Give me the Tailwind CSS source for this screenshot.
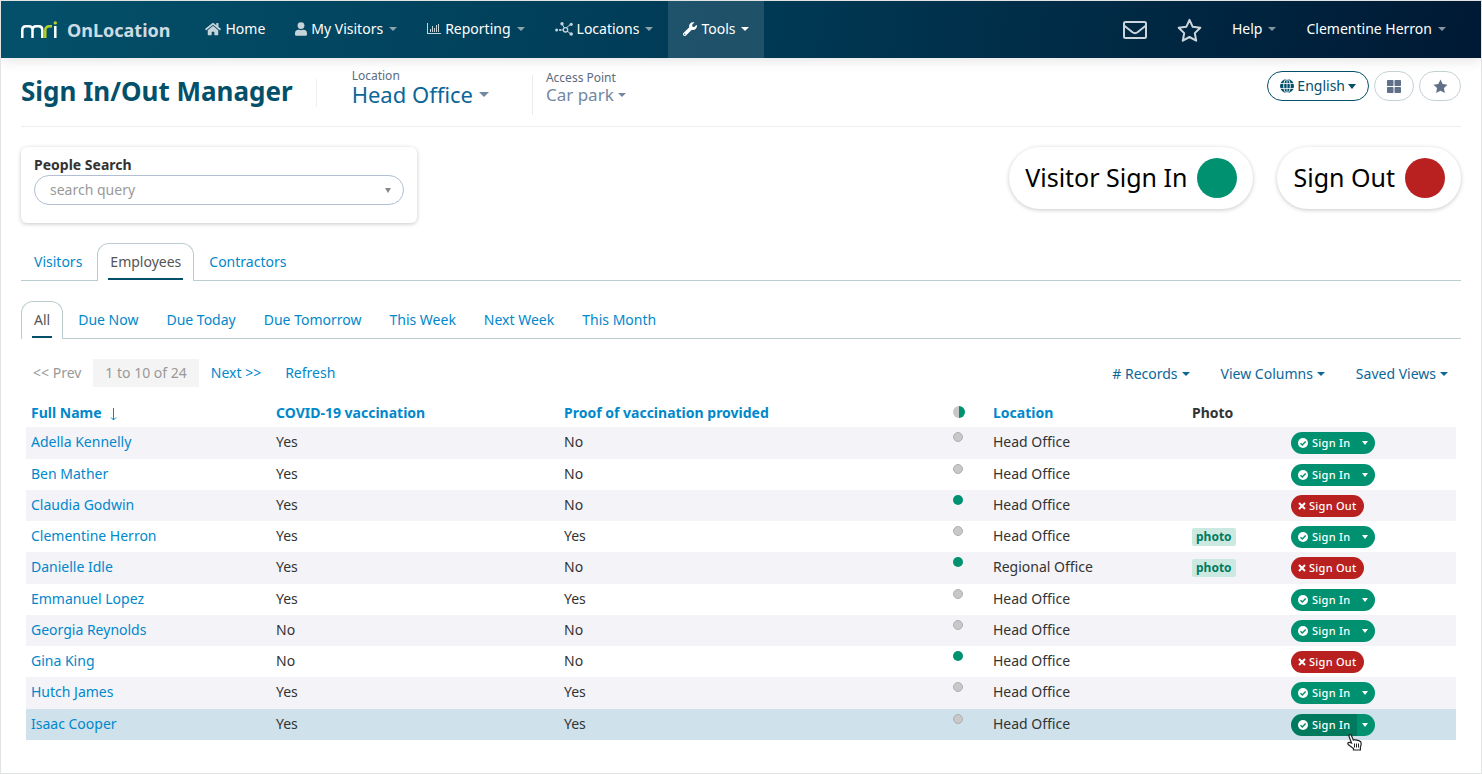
<!DOCTYPE html>
<html lang="en">
<head>
  <meta charset="UTF-8" />
  <meta name="viewport" content="width=device-width, initial-scale=1.0" />
  <title>Sign In/Out Manager</title>
  <script src="https://cdn.jsdelivr.net/npm/@tailwindcss/browser@4"></script>
</head>
<body class="min-h-screen border border-[#e2e4e4] bg-white font-['Noto_Sans',sans-serif] text-sm text-[#333]">

  <!-- Top bar -->
  <header class="flex h-[57px] items-center justify-between bg-linear-[100deg] from-[#04506a] via-[#003a55] to-[#001934] px-5 text-white shadow-[0_2px_12px_rgba(0,0,0,0.12)]">
    <div class="flex h-full items-center">
      <a href="#" class="mr-[20px] flex items-center gap-[10px]">
        <svg class="h-[18px] w-[36px]" viewBox="0 0 36 18" fill="none" stroke-width="2.5" aria-label="mri">
          <path d="M1.300 17V9Q1.300 5.200 5 5.200H7.800Q11.500 5.200 11.500 9V17M11.500 9Q11.500 5.200 15.200 5.200H17.800Q21.300 5.200 21.300 9V17" stroke="#fff" />
          <path d="M24.300 17V9.500Q24.300 5.200 28.500 5.200H31" stroke="#b4cf2c" />
          <path d="M34.300 17V5" stroke="#fff" />
          <circle cx="34.300" cy="1.900" r="1.700" fill="#b4cf2c" />
        </svg>
        <span class="text-lg font-bold text-[#cddbe2]">OnLocation</span>
      </a>
      <nav class="flex h-full items-center">
        <a href="#" class="flex h-full items-center gap-1 px-[15px] pb-[2px]">
          <svg class="h-[14px] w-4 fill-[#c5d3db]" viewBox="0 0 576 512"><path d="M280 148L96 300v164a16 16 0 0 0 16 16h112a16 16 0 0 0 16-16v-96a16 16 0 0 1 16-16h64a16 16 0 0 1 16 16v96a16 16 0 0 0 16 16h112a16 16 0 0 0 16-16V300L296 148a12 12 0 0 0-16 0zM572 251l-84-69V44a12 12 0 0 0-12-12h-56a12 12 0 0 0-12 12v72l-89-74a48 48 0 0 0-61 0L4 251a12 12 0 0 0-2 17l26 31a12 12 0 0 0 17 2L280 107a12 12 0 0 1 16 0l235 194a12 12 0 0 0 17-2l26-31a12 12 0 0 0-2-17z" /></svg>
          Home
        </a>
        <button type="button" class="flex h-full items-center gap-1 px-[15px] pb-[2px]">
          <svg class="h-[14px] w-[12px] fill-[#c5d3db]" viewBox="0 0 448 512"><path d="M224 256a128 128 0 1 0 0-256 128 128 0 0 0 0 256zm90 32h-17a174 174 0 0 1-146 0h-17A134 134 0 0 0 0 422v42a48 48 0 0 0 48 48h352a48 48 0 0 0 48-48v-42a134 134 0 0 0-134-134z" /></svg>
          My Visitors
          <span class="ml-[2px] border-x-4 border-t-4 border-x-transparent border-t-[#8fa3af]"></span>
        </button>
        <button type="button" class="flex h-full items-center gap-1 px-[15px] pb-[2px]">
          <svg class="h-[12px] w-[14px] fill-[#c5d3db]" viewBox="0 0 14 12"><path d="M0 0h1v10h13v1H0zM3 6h1v3H3zM5 3h1v6H5zM7 5h1v4H7zM9 2h1v7H9zM11 1h1v8h-1z" /></svg>
          Reporting
          <span class="ml-[2px] border-x-4 border-t-4 border-x-transparent border-t-[#8fa3af]"></span>
        </button>
        <button type="button" class="flex h-full items-center gap-1 px-[15px] pb-[2px]">
          <svg class="h-[14px] w-[18px]" viewBox="0 0 18 14" fill="#c5d3db" stroke="#c5d3db">
            <path d="M5 8h4M7 2l3 5M15.500 2.500L11 6M12 9l4 3" />
            <circle cx="10.500" cy="7.800" r="2.200" fill="#003a55" stroke-width="1.300" />
            <g stroke="none"><circle cx="1.600" cy="8" r="1.500" /><circle cx="5" cy="8" r="1.100" /><circle cx="7" cy="1.800" r="1.700" /><circle cx="16.200" cy="2.300" r="1.600" /><circle cx="16.200" cy="12" r="1.800" /></g>
          </svg>
          Locations
          <span class="ml-[2px] border-x-4 border-t-4 border-x-transparent border-t-[#8fa3af]"></span>
        </button>
        <button type="button" class="flex h-full items-center gap-1 bg-white/12 px-[15px] pb-[2px]">
          <svg class="size-[14px] fill-white" viewBox="0 0 512 512"><path d="M507 115a12 12 0 0 0-20-6l-74 75-68-12-11-67 74-75a12 12 0 0 0-5-20 144 144 0 0 0-173 182L19 402a64 64 0 0 0 91 91l210-211a144 144 0 0 0 187-167zM64 472a24 24 0 1 1 0-48 24 24 0 0 1 0 48z" /></svg>
          Tools
          <span class="ml-[2px] border-x-4 border-t-4 border-x-transparent border-t-white"></span>
        </button>
      </nav>
    </div>
    <div class="flex h-full items-center">
      <button type="button" class="px-[15px]" aria-label="Messages">
        <svg class="h-[18px] w-6 fill-none stroke-[#cbd6dd] stroke-2" viewBox="0 0 24 18"><rect x="1" y="1" width="22" height="16" rx="1.500" /><path d="M1 4.500l8.500 6.800q2.500 1.800 5 0L23 4.500" /></svg>
      </button>
      <button type="button" class="px-[15px]" aria-label="Favourites">
        <svg class="mt-[2px] size-[25px] fill-none stroke-[#cbd6dd] stroke-2" viewBox="0 0 25 25" stroke-linejoin="round"><path d="M12.500 1.800l3.200 7 7.600 1-5.500 5.300 1.400 7.600-6.700-3.700-6.700 3.700 1.400-7.600L1.700 9.800l7.600-1z" /></svg>
      </button>
      <button type="button" class="flex h-full items-center gap-[6px] px-[15px] pb-[2px]">Help <span class="border-x-4 border-t-4 border-x-transparent border-t-[#8295a1]"></span></button>
      <button type="button" class="flex h-full items-center gap-[6px] px-[15px] pb-[2px]">Clementine Herron <span class="border-x-4 border-t-4 border-x-transparent border-t-[#8295a1]"></span></button>
    </div>
  </header>

  <main class="px-5">
    <!-- Page heading -->
    <div class="flex h-[69px] items-start justify-between border-b border-[#eee]">
      <div class="flex items-start">
        <h1 class="mt-[15px] pr-[23px] text-[26px] leading-9 font-bold text-[#04506a]">Sign In/Out Manager</h1>
        <div class="mt-[21px] h-7 w-[36px] border-l border-[#eee]"></div>
        <div class="mt-[9px] pr-[40px]">
          <span id="location-label" class="block text-xs leading-[18px] text-[#5b6b80]">Location</span>
          <button type="button" aria-labelledby="location-label location-value" class="flex items-center gap-[6px] text-[22px] leading-[18px] text-[#0c6698]">
            <span id="location-value">Head Office</span>
            <span class="border-x-5 border-t-5 border-x-transparent border-t-[#7288a0]"></span>
          </button>
        </div>
        <div class="ml-[3px] mt-[17px] h-10 w-[14px] border-l border-[#e8eeee]"></div>
        <div class="mt-[11px]">
          <span id="access-label" class="block text-xs leading-[18px] text-[#5b6b80]">Access Point</span>
          <button type="button" aria-labelledby="access-label access-value" class="flex items-center gap-1 text-[17px] leading-4 text-[#7288a0]">
            <span id="access-value">Car park</span>
            <span class="border-x-4 border-t-4 border-x-transparent border-t-[#7288a0]"></span>
          </button>
        </div>
      </div>
      <div class="mt-[13px] flex gap-[5px]">
        <button type="button" class="flex h-[30px] items-center gap-[3px] rounded-full border border-[#04506a] px-3 text-[#04506a]">
          <svg class="size-[14px]" viewBox="0 0 14 14" fill="none" stroke="#fff"><circle cx="7" cy="7" r="7" fill="#04506a" stroke="none" /><path d="M0 4.500h14M0 9.500h14M7 0v14" stroke-width=".8" /><ellipse cx="7" cy="7" rx="3.300" ry="7" stroke-width=".9" /></svg>
          English
          <span class="border-x-4 border-t-5 border-x-transparent border-t-[#04506a]"></span>
        </button>
        <button type="button" aria-label="Dashboard" class="flex h-[30px] w-10 items-center justify-center rounded-full border border-[#c3d1d5]">
          <svg class="h-[13px] w-[14px] fill-[#5f7088]" viewBox="0 0 14 13"><rect width="6.500" height="6" rx=".7" /><rect x="7.500" width="6.500" height="6" rx=".7" /><rect y="7" width="6.500" height="6" rx=".7" /><rect x="7.500" y="7" width="6.500" height="6" rx=".7" /></svg>
        </button>
        <button type="button" aria-label="Add to favourites" class="flex h-[30px] w-[42px] items-center justify-center rounded-full border border-[#c3d1d5]">
          <svg class="size-[15px] fill-[#5f7088]" viewBox="0 0 25 25"><path d="M12.500 1l3.600 7.300 8.100 1.200-5.900 5.600 1.400 8.100-7.200-3.800-7.200 3.800 1.400-8.100L.8 9.500l8.100-1.200z" /></svg>
        </button>
      </div>
    </div>

    <!-- Search and kiosk buttons -->
    <div class="mt-5 flex items-start justify-between">
      <div class="h-[76px] w-[396px] rounded-md px-[13px] pt-2 shadow-[0_1px_4px_rgba(0,0,0,0.22)]">
        <label for="people-search" class="block leading-5 font-bold">People Search</label>
        <div class="relative">
          <input id="people-search" type="text" placeholder="search query" class="h-[30px] w-full rounded-full border border-[#b2bed1] px-[15px] pb-[2px] placeholder:text-[#999]" />
          <span class="absolute top-[13px] right-[13px] border-x-3 border-t-5 border-x-transparent border-t-[#888]"></span>
        </div>
      </div>
      <div class="flex gap-6 text-[25px] text-black">
        <button type="button" class="flex h-[62px] items-center gap-[10px] rounded-full px-4 shadow-[0_1px_4px_rgba(0,0,0,0.22)]">Visitor Sign In <span class="size-10 rounded-full bg-[#009270]"></span></button>
        <button type="button" class="flex h-[62px] items-center gap-[10px] rounded-full px-4 shadow-[0_1px_4px_rgba(0,0,0,0.22)]">Sign Out <span class="size-10 rounded-full bg-[#b92121]"></span></button>
      </div>
    </div>

    <!-- Tabs -->
    <nav class="mt-5 flex h-[38px] gap-[2px] border-b border-[#bccdd0] text-[#0088cc]">
      <a href="#" class="px-[13px] pt-[9px]">Visitors</a>
      <a href="#" class="relative h-[38px] rounded-t-xl border border-b-0 border-[#bccdd0] bg-white px-3 pt-2 text-[#555] after:absolute after:inset-x-[10px] after:bottom-px after:h-[2px] after:bg-[#04506a]">Employees</a>
      <a href="#" class="px-[13px] pt-[9px]">Contractors</a>
    </nav>
    <nav class="mt-5 flex h-[38px] gap-[2px] border-b border-[#bccdd0] text-[#0088cc]">
      <a href="#" class="relative h-[38px] rounded-t-xl border border-b-0 border-[#bccdd0] bg-white px-3 pt-2 text-[#555] after:absolute after:inset-x-[10px] after:bottom-px after:h-[2px] after:bg-[#04506a]">All</a>
      <a href="#" class="px-[13px] pt-[9px]">Due Now</a>
      <a href="#" class="px-[13px] pt-[9px]">Due Today</a>
      <a href="#" class="px-[13px] pt-[9px]">Due Tomorrow</a>
      <a href="#" class="px-[13px] pt-[9px]">This Week</a>
      <a href="#" class="px-[13px] pt-[9px]">Next Week</a>
      <a href="#" class="px-[13px] pt-[9px]">This Month</a>
    </nav>

    <!-- Pager -->
    <div class="mt-5 flex items-center justify-between">
      <div class="flex leading-7 text-[#0088cc]">
        <span class="px-3 text-[#999]">&lt;&lt; Prev</span>
        <span class="bg-[#f4f4f4] px-3 text-[#999]">1 to 10 of 24</span>
        <a href="#" class="px-3">Next &gt;&gt;</a>
        <a href="#" class="px-3">Refresh</a>
      </div>
      <div class="flex gap-[31px] pt-[2px] pr-[13px] text-[#0c6698]">
        <button type="button" class="flex items-center gap-1"># Records <span class="border-x-4 border-t-4 border-x-transparent border-t-[#0c6698]"></span></button>
        <button type="button" class="flex items-center gap-1">View Columns <span class="border-x-4 border-t-4 border-x-transparent border-t-[#0c6698]"></span></button>
        <button type="button" class="flex items-center gap-1">Saved Views <span class="border-x-4 border-t-4 border-x-transparent border-t-[#0c6698]"></span></button>
      </div>
    </div>

    <div class="mt-4 px-[5px]">
      <table class="w-full table-fixed text-left leading-5">
        <thead class="text-[#0088cc]">
          <tr class="h-6 align-top">
            <th class="w-[245px] px-[5px]">
              <span class="flex items-center gap-2">Full Name
                <svg class="mt-[3px] h-[13px] w-[7px] fill-none stroke-current" viewBox="0 0 7 13"><path d="M3.500 0v12M1 9.500l2.500 2.500L6 9.500" /></svg>
              </span>
            </th>
            <th class="w-[288px] px-[5px]">COVID-19 vaccination</th>
            <th class="w-[389px] px-[5px]">Proof of vaccination provided</th>
            <th class="w-[40px] px-[5px] pt-[3px]"><span class="block size-3 rounded-full bg-linear-to-r from-[#c8c8c8] from-50% to-[#009270] to-50%"></span></th>
            <th class="w-[199px] px-[5px]">Location</th>
            <th class="w-[99px] px-[5px] text-[#333]">Photo</th>
            <th></th>
          </tr>
        </thead>
        <tbody id="people"></tbody>
      </table>
    </div>
  </main>

  <script>
    // name, vaccinated, proof, on site, location, photo
    const people = [
      ["Adella Kennelly", "Yes", "No", false, "Head Office", false],
      ["Ben Mather", "Yes", "No", false, "Head Office", false],
      ["Claudia Godwin", "Yes", "No", true, "Head Office", false],
      ["Clementine Herron", "Yes", "Yes", false, "Head Office", true],
      ["Danielle Idle", "Yes", "No", true, "Regional Office", true],
      ["Emmanuel Lopez", "Yes", "Yes", false, "Head Office", false],
      ["Georgia Reynolds", "No", "No", false, "Head Office", false],
      ["Gina King", "No", "No", true, "Head Office", false],
      ["Hutch James", "Yes", "Yes", false, "Head Office", false],
      ["Isaac Cooper", "Yes", "Yes", false, "Head Office", false],
    ];

    const signOut = `
      <button type="button" class="flex h-[22px] items-center gap-[3px] rounded-full bg-[#b92121] px-[7px] text-[11px] font-medium tracking-wide text-white">
        <svg class="size-2 fill-none stroke-white stroke-2" viewBox="0 0 8 8"><path d="M1 1l6 6M7 1L1 7" /></svg>Sign Out
      </button>`;

    const signIn = (active) => `
      <div class="relative flex h-[22px] w-[84px] text-[11px] font-medium tracking-wide text-white">
        <button type="button" class="flex w-[66px] items-center gap-1 rounded-l-full pl-[7px] ${active ? "bg-[#007a5e]" : "bg-[#009270]"}">
          <svg class="size-[10px]" viewBox="0 0 10 10"><circle cx="5" cy="5" r="5" fill="#fff" /><path d="M2.500 5.200l1.800 1.800 3.400-3.600" fill="none" stroke="#009270" stroke-width="1.400" /></svg>Sign In
        </button>
        <button type="button" aria-label="More options" class="flex w-[18px] items-center rounded-r-full bg-[#009270] pl-[5px]">
          <span class="border-x-3 border-t-4 border-x-transparent border-t-white"></span>
        </button>
        ${active ? `<svg class="absolute top-[20px] left-[56px] h-[17px] w-[15px]" viewBox="0 0 15 17"><path d="M4.500 9L2 2.300Q1.800.9 3 .7 4 .6 4.500 1.800L6.300 6q1-.9 2 .1 1.200-.7 2.100.4 1.400-.6 2.100.6 1.300 0 1.500 1.500.4 2.600-.6 4.400v3H6.500v-1.400L1.200 10.500Q.4 9.200 1.400 8.600 2.700 8.200 4.500 9z" fill="#fff" stroke="#222" stroke-width="1.200" /><path d="M7.500 9.500v4M9.500 9.500v4M11.500 9.500v4" stroke="#222" /></svg>` : ""}
      </div>`;

    document.getElementById("people").innerHTML = people.map(([name, vaccinated, proof, onSite, location, photo], i) => `
      <tr class="h-[31px] align-top nth-[4n+1]:h-8 ${i === people.length - 1 ? "bg-[#cfe1ea]" : "odd:bg-[#f4f3f8]"}">
        <td class="px-[5px] pt-[5px]"><a href="#" class="text-[#0088cc]">${name}</a></td>
        <td class="px-[5px] pt-[5px]">${vaccinated}</td>
        <td class="px-[5px] pt-[5px]">${proof}</td>
        <td class="px-[5px] pt-[5px]"><span class="block size-[10px] rounded-full ${onSite ? "bg-[#009270]" : "border border-[#b0b0b0] bg-[#c8c8c8]"}"></span></td>
        <td class="px-[5px] pt-[5px]">${location}</td>
        <td class="px-[5px] pt-[7px]">${photo ? `<span class="block w-fit rounded-xs bg-[#cce9e1] px-1 text-xs leading-[18px] font-bold text-[#007a5e]">photo</span>` : ""}</td>
        <td class="px-[5px] pt-[5px]">${onSite ? signOut : signIn(i === people.length - 1)}</td>
      </tr>`).join("");
  </script>
</body>
</html>
